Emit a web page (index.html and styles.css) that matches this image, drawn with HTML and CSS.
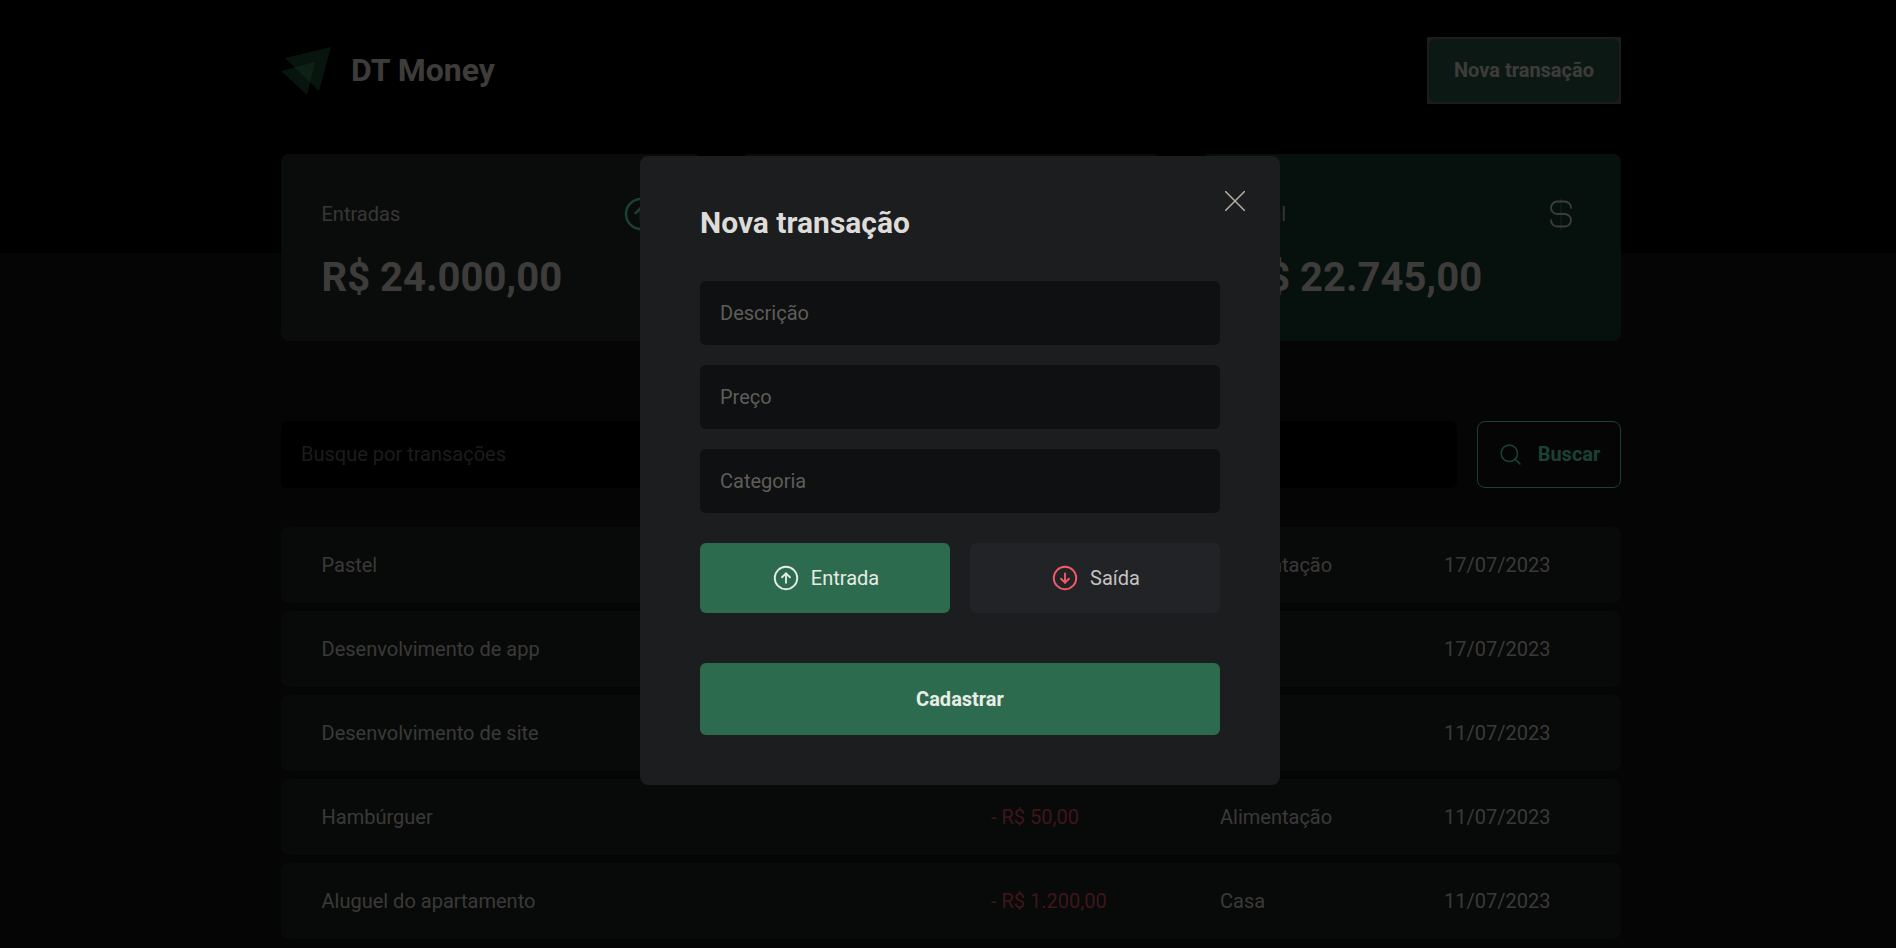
FILE: index.html
```html
<!DOCTYPE html>
<html lang="pt-BR">
<head>
  <meta charset="UTF-8">
  <title>DT Money</title>
  <link rel="stylesheet" href="styles.css">
</head>
<body>
  <header class="page-header">
    <div class="container header-content">
      <div class="logo">
        <svg class="logo-mark" viewBox="0 0 50 48" width="50" height="48">
          <polygon points="50,0 4,11 38,44" fill="#4cc38a" fill-opacity="0.35"/>
          <polygon points="34,15 0,24 26,48" fill="#4cc38a" fill-opacity="0.35"/>
        </svg>
        <span class="logo-text">DT Money</span>
      </div>
      <button class="new-button"><span>Nova transação</span></button>
    </div>
  </header>

  <section class="container summary">
    <div class="summary-card">
      <div class="summary-top">
        <span>Entradas</span>
        <svg class="icon-40 icon-green" viewBox="0 0 256 256"><circle cx="128" cy="128" r="96"/><polyline points="94.1 121.9 128 88 161.9 121.9"/><line x1="128" y1="168" x2="128" y2="88"/></svg>
      </div>
      <strong>R$ 24.000,00</strong>
    </div>
    <div class="summary-card">
      <div class="summary-top">
        <span>Saídas</span>
        <svg class="icon-40 icon-red" viewBox="0 0 256 256"><circle cx="128" cy="128" r="96"/><polyline points="94.1 134.1 128 168 161.9 134.1"/><line x1="128" y1="88" x2="128" y2="168"/></svg>
      </div>
      <strong>R$ 1.255,00</strong>
    </div>
    <div class="summary-card summary-total">
      <div class="summary-top">
        <span>Total</span>
        <svg class="icon-40 icon-white" viewBox="0 0 256 256"><line class="dollar-stem" x1="128" y1="24" x2="128" y2="232"/><path d="M64,168a40,40,0,0,0,40,40h48a40,40,0,0,0,0-80H104a40,40,0,0,1,0-80h48a40,40,0,0,1,40,40"/></svg>
      </div>
      <strong>R$ 22.745,00</strong>
    </div>
  </section>

  <main class="container">
    <form class="search-form">
      <input type="text" placeholder="Busque por transações">
      <button type="button">
        <svg class="icon-25" viewBox="0 0 256 256"><circle cx="116" cy="116" r="84"/><line x1="175.4" y1="175.4" x2="224" y2="224"/></svg>
        Buscar
      </button>
    </form>

    <div class="transactions">
      <div class="row"><span>Pastel</span><span class="outcome">- R$ 5,00</span><span>Alimentação</span><span>17/07/2023</span></div>
      <div class="row"><span>Desenvolvimento de app</span><span class="income">R$ 12.000,00</span><span>Venda</span><span>17/07/2023</span></div>
      <div class="row"><span>Desenvolvimento de site</span><span class="income">R$ 12.000,00</span><span>Venda</span><span>11/07/2023</span></div>
      <div class="row"><span>Hambúrguer</span><span class="outcome">- R$ 50,00</span><span>Alimentação</span><span>11/07/2023</span></div>
      <div class="row"><span>Aluguel do apartamento</span><span class="outcome">- R$ 1.200,00</span><span>Casa</span><span>11/07/2023</span></div>
    </div>
  </main>

  <div class="overlay">
    <div class="modal">
      <button class="close-button" aria-label="Fechar">
        <svg viewBox="0 0 20 20" width="20" height="20"><path d="M0.5 0.5L19.5 19.5M19.5 0.5L0.5 19.5"/></svg>
      </button>
      <h2>Nova transação</h2>
      <form class="modal-form">
        <input type="text" placeholder="Descrição">
        <input type="text" placeholder="Preço">
        <input type="text" placeholder="Categoria">
        <div class="type-toggle">
          <button type="button" class="type-button type-active">
            <svg class="icon-30 icon-light" viewBox="0 0 256 256"><circle cx="128" cy="128" r="96"/><polyline points="94.1 121.9 128 88 161.9 121.9"/><line x1="128" y1="168" x2="128" y2="88"/></svg>
            Entrada
          </button>
          <button type="button" class="type-button">
            <svg class="icon-30 icon-pink" viewBox="0 0 256 256"><circle cx="128" cy="128" r="96"/><polyline points="94.1 134.1 128 168 161.9 134.1"/><line x1="128" y1="88" x2="128" y2="168"/></svg>
            Saída
          </button>
        </div>
        <button type="button" class="submit-button">Cadastrar</button>
      </form>
    </div>
  </div>
</body>
</html>
```

FILE: styles.css
```css
* {
  box-sizing: border-box;
  margin: 0;
  padding: 0;
}

html, body {
  height: 948px;
  overflow: hidden;
}

body {
  background-color: #111;
  color: #cbc8c3;
  font-family: 'Roboto', sans-serif;
  font-size: 20px;
}

input, button {
  font-family: 'Roboto', sans-serif;
  font-size: 20px;
  border: none;
}

svg {
  fill: none;
  stroke-linecap: round;
  stroke-linejoin: round;
}

.container {
  width: 1340px;
  margin-left: 281px;
}

/* header */
.page-header {
  background-color: #000;
  height: 253px;
  padding-top: 37px;
}

.header-content {
  display: flex;
  align-items: center;
  justify-content: space-between;
  height: 67px;
}

.logo {
  display: flex;
  align-items: center;
  gap: 20px;
}

.logo-mark {
  flex-shrink: 0;
}

.logo-text {
  margin-bottom: 2px;
  font-size: 32px;
  font-weight: 700;
  color: #cbc8c3;
}

.new-button {
  width: 194px;
  height: 67px;
  padding: 2px;
  background-color: #5e5e5e;
  color: #cbc8c3;
  font-weight: 700;
}

.new-button span {
  display: flex;
  align-items: center;
  justify-content: center;
  height: 100%;
  padding-bottom: 2px;
  background-color: #285040;
  border-radius: 6px;
}

/* summary cards */
.summary {
  display: grid;
  grid-template-columns: repeat(3, 1fr);
  gap: 40px;
  margin-top: -99px;
}

.summary-card {
  height: 187px;
  padding: 40px 40px 40px 40.5px;
  background-color: #222828;
  border-radius: 8px;
}

.summary-total {
  background-color: #14362b;
}

.summary-top {
  display: flex;
  align-items: center;
  justify-content: space-between;
  height: 40px;
  color: #b7b4ad;
}

.summary-card strong {
  display: block;
  margin-top: 20px;
  font-size: 40px;
  line-height: 47px;
  font-weight: 700;
}

.icon-40 {
  width: 40px;
  height: 40px;
  stroke-width: 16;
}

.icon-green {
  stroke: #5cd6ae;
}

.icon-red {
  stroke: #ce4b57;
}

.icon-white {
  stroke: #cbc8c3;
  stroke-width: 12;
}

.dollar-stem {
  stroke-width: 7;
  opacity: 0.35;
}

/* search */
.search-form {
  display: flex;
  gap: 20px;
  margin-top: 80px;
}

.search-form input {
  flex: 1;
  height: 67px;
  padding: 0 20px 2px;
  background-color: #000;
  border-radius: 6px;
  color: #cbc8c3;
}

.search-form input::placeholder {
  color: #5e5e5e;
}

.search-form button {
  display: flex;
  align-items: center;
  justify-content: center;
  gap: 15px;
  width: 144px;
  height: 67px;
  padding-bottom: 1px;
  background: transparent;
  border: 1px solid #5cd6ae;
  border-radius: 8px;
  color: #5cd6ae;
  font-weight: 700;
}

.icon-25 {
  width: 25px;
  height: 25px;
  stroke: #5cd6ae;
  stroke-width: 16;
}

/* transactions */
.transactions {
  display: flex;
  flex-direction: column;
  gap: 8px;
  margin-top: 39px;
}

.row {
  display: grid;
  grid-template-columns: 669.5px 229px 224px 1fr;
  align-items: center;
  height: 76px;
  padding: 0 40px 0 40.5px;
  background-color: #1b1e1e;
  border-radius: 8px;
  color: #c1beb9;
}

.income {
  color: #00b37e;
}

.outcome {
  color: #ce4b57;
}

/* modal */
.overlay {
  position: fixed;
  top: 0;
  left: 0;
  width: 100%;
  height: 100%;
  background-color: rgba(0, 0, 0, 0.7);
}

.modal {
  position: absolute;
  top: 156px;
  left: 640px;
  width: 640px;
  height: 629px;
  padding: 50px 60px;
  background-color: #1b1d1f;
  border-radius: 8px;
}

.modal h2 {
  font-size: 30px;
  line-height: 33px;
  font-weight: 700;
  color: #dddcd9;
}

.close-button {
  position: absolute;
  top: 35px;
  right: 35px;
  width: 20px;
  height: 20px;
  background: transparent;
  line-height: 0;
}

.close-button svg {
  stroke: #b5aea2;
  stroke-width: 1.5;
}

.modal-form {
  display: flex;
  flex-direction: column;
  gap: 20px;
  margin-top: 42px;
}

.modal-form input {
  width: 100%;
  height: 64px;
  padding: 0 20px;
  background-color: #0e1012;
  border-radius: 6px;
  color: #e1e1df;
}

.modal-form input::placeholder {
  color: #5f5d58;
}

.type-toggle {
  display: grid;
  grid-template-columns: 1fr 1fr;
  gap: 20px;
  margin-top: 10px;
}

.type-button {
  display: flex;
  align-items: center;
  justify-content: center;
  gap: 10px;
  height: 70px;
  background-color: #222326;
  border-radius: 6px;
  color: #c4c4c0;
}

.type-active {
  background-color: #2d6b4e;
  color: #e6ebe6;
}

.icon-30 {
  width: 30px;
  height: 30px;
  stroke-width: 16;
}

.icon-light {
  stroke: #e6ebe6;
}

.icon-pink {
  stroke: #f75a68;
}

.submit-button {
  height: 72px;
  margin-top: 30px;
  background-color: #2d6b4e;
  border-radius: 6px;
  color: #e9ede8;
  font-weight: 700;
}
```
